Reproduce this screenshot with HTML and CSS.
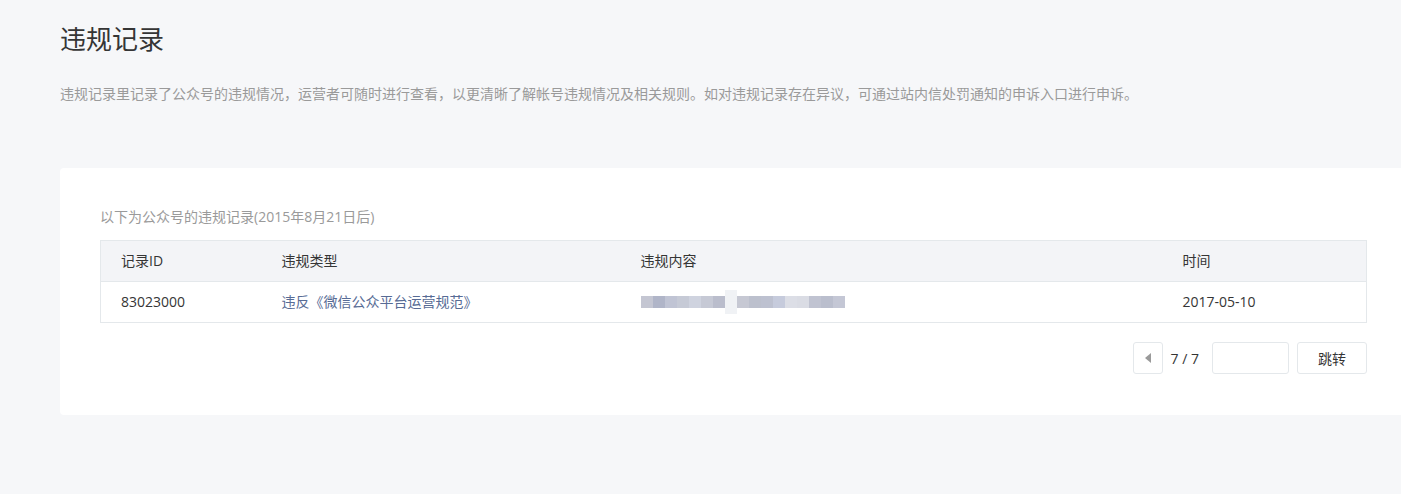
FILE: index.html
```html
<!DOCTYPE html>
<html lang="zh-CN">
<head>
    <meta charset="UTF-8">
    <meta name="viewport" content="width=device-width, initial-scale=1.0">
    <title>违规记录</title>
    <link rel="stylesheet" href="styles.css">
</head>
<body>
    <div class="page">
        <h1 class="page-title">违规记录</h1>
        <p class="page-desc">违规记录里记录了公众号的违规情况，运营者可随时进行查看，以更清晰了解帐号违规情况及相关规则。如对违规记录存在异议，可通过站内信处罚通知的申诉入口进行申诉。</p>

        <div class="card">
            <p class="card-tips">以下为公众号的违规记录(2015年8月21日后)</p>
            <table class="record-table">
                <colgroup>
                    <col class="col-id">
                    <col class="col-type">
                    <col class="col-content">
                    <col>
                </colgroup>
                <thead>
                    <tr>
                        <th>记录ID</th>
                        <th>违规类型</th>
                        <th>违规内容</th>
                        <th>时间</th>
                    </tr>
                </thead>
                <tbody>
                    <tr>
                        <td>83023000</td>
                        <td><a href="#" class="rule-link">违反《微信公众平台运营规范》</a></td>
                        <td>
                            <!-- content is blurred in the source, drawn as a mosaic -->
                            <span class="mosaic">
                                <i></i><i></i><i></i><i></i><i></i><i></i><i></i><i class="gap"></i><i></i><i></i><i></i><i></i><i></i><i></i><i></i><i></i><i></i>
                            </span>
                        </td>
                        <td>2017-05-10</td>
                    </tr>
                </tbody>
            </table>

            <div class="pager">
                <button type="button" class="pager-prev" aria-label="上一页">
                    <svg width="6" height="10" viewBox="0 0 6 10"><path d="M6 0 L0 5 L6 10 Z" fill="#9a9a9a"/></svg>
                </button>
                <span class="pager-num">7 / 7</span>
                <input type="text" class="pager-input" aria-label="页码">
                <button type="button" class="pager-go">跳转</button>
            </div>
        </div>
    </div>
</body>
</html>
```

FILE: styles.css
```css
html, body {
    margin: 0;
    padding: 0;
}
body {
    font-family: "Open Sans", "Noto Sans CJK SC", sans-serif;
    background-color: #f6f7f9;
    color: #353535;
    font-size: 14px;
    overflow: hidden;
}
.page {
    padding: 21px 0 0 60px;
}
.page-title {
    font-size: 26px;
    font-weight: normal;
    line-height: 36px;
    margin: 0;
    color: #353535;
}
.page-desc {
    margin: 26px 0 0 0;
    line-height: 22px;
    color: #9a9a9a;
    font-size: 14px;
}
/* white block that runs off the right edge */
.card {
    background: #fff;
    border-radius: 4px;
    width: 1267px;
    padding: 40px 40px 41px 40px;
    margin-top: 63px;
}
.card-tips {
    margin: 0 0 14px 0;
    line-height: 18px;
    color: #9a9a9a;
}
.record-table {
    width: 100%;
    border-collapse: collapse;
    table-layout: fixed;
    border: 1px solid #e4e8eb;
}
.col-id {
    width: 161px;
}
.col-type {
    width: 359px;
}
.col-content {
    width: 542px;
}
.record-table th,
.record-table td {
    text-align: left;
    font-weight: normal;
    padding: 0 20px;
    height: 40px;
    line-height: 20px;
}
.record-table th {
    background: #f3f4f7;
    border-bottom: 1px solid #e4e8eb;
    color: #353535;
}
.rule-link {
    color: #576b95;
    text-decoration: none;
}
.mosaic {
    display: flex;
    align-items: center;
    height: 20px;
}
.mosaic i {
    display: block;
    width: 12px;
    height: 12px;
    background: #c4c6d2;
}
.mosaic i:nth-child(2) { background: #b0b5c8; }
.mosaic i:nth-child(3) { background: #c0c4d4; }
.mosaic i:nth-child(4) { background: #c6cad6; }
.mosaic i:nth-child(5) { background: #cfd3df; }
.mosaic i:nth-child(6) { background: #c6c9d5; }
.mosaic i:nth-child(7) { background: #babdcc; }
.mosaic i:nth-child(9) { background: #c6c8d3; }
.mosaic i:nth-child(10) { background: #bcc0cd; }
.mosaic i:nth-child(11) { background: #bdc1d0; }
.mosaic i:nth-child(12) { background: #c6cbdc; }
.mosaic i:nth-child(13) { background: #dcdee6; }
.mosaic i:nth-child(14) { background: #dadce4; }
.mosaic i:nth-child(15) { background: #c0c3d1; }
.mosaic i:nth-child(16) { background: #babecd; }
.mosaic i:nth-child(17) { background: #c4c7d5; }
.mosaic i.gap {
    height: 24px;
    background: #f0f2f5;
}
.pager {
    display: flex;
    justify-content: flex-end;
    align-items: center;
    margin-top: 19px;
    gap: 8px;
}
.pager-prev,
.pager-input,
.pager-go {
    box-sizing: border-box;
    height: 32px;
    border: 1px solid #e4e8eb;
    border-radius: 3px;
    background: #fff;
    font-family: inherit;
    font-size: 14px;
    color: #353535;
}
.pager-prev {
    width: 30px;
    padding: 0;
    display: flex;
    align-items: center;
    justify-content: center;
}
.pager-num {
    margin: 0 5px 0 0;
}
.pager-input {
    width: 77px;
    padding: 0 8px;
}
.pager-go {
    width: 70px;
    cursor: pointer;
}
```
